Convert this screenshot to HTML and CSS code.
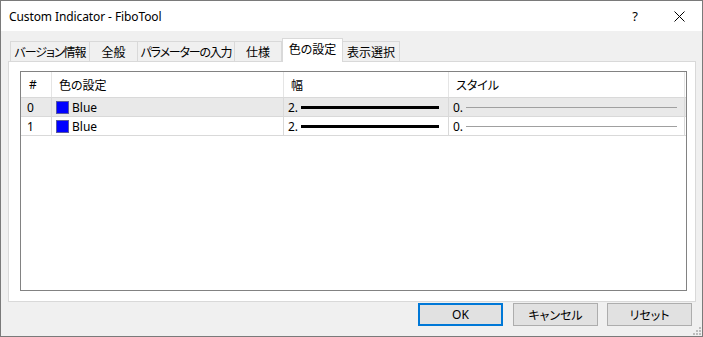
FILE: index.html
```html
<!DOCTYPE html>
<html lang="ja">
<head>
<meta charset="utf-8">
<title>Custom Indicator - FiboTool</title>
<link rel="stylesheet" href="styles.css">
</head>
<body>
<div class="window">
  <div class="titlebar">
    <span class="title">Custom Indicator - FiboTool</span>
    <div class="title-actions">
      <span class="help">?</span>
      <svg class="close" width="11" height="11" viewBox="0 0 11 11"><path d="M0.5 0.5 L10.5 10.5 M10.5 0.5 L0.5 10.5" stroke="#000" stroke-width="1" fill="none"/></svg>
    </div>
  </div>
  <div class="content">
    <div class="tabs">
      <div class="tab tab-first t1">バージョン情報</div>
      <div class="tab t2">全般</div>
      <div class="tab t3">パラメーターの入力</div>
      <div class="tab t4">仕様</div>
      <div class="tab tab-active t5">色の設定</div>
      <div class="tab t6">表示選択</div>
    </div>
    <div class="panel">
      <div class="listbox">
        <div class="row head">
          <div class="cell c-num">#</div>
          <div class="cell c-color">色の設定</div>
          <div class="cell c-width">幅</div>
          <div class="cell c-style">スタイル</div>
        </div>
        <div class="row item selected">
          <div class="cell c-num">0</div>
          <div class="cell c-color"><span class="swatch"></span>Blue</div>
          <div class="cell c-width"><span class="val">2.</span><span class="thick"></span></div>
          <div class="cell c-style"><span class="val">0.</span><span class="thin"></span></div>
        </div>
        <div class="row item">
          <div class="cell c-num">1</div>
          <div class="cell c-color"><span class="swatch"></span>Blue</div>
          <div class="cell c-width"><span class="val">2.</span><span class="thick"></span></div>
          <div class="cell c-style"><span class="val">0.</span><span class="thin"></span></div>
        </div>
      </div>
    </div>
    <div class="buttons">
      <button class="btn btn-default">OK</button>
      <button class="btn btn-cancel">キャンセル</button>
      <button class="btn">リセット</button>
    </div>
  </div>
  <svg class="grip" width="9" height="9" viewBox="0 0 9 9">
    <rect x="7" y="1" width="2" height="2" fill="#bcbcbc"/>
    <rect x="4" y="4" width="2" height="2" fill="#bcbcbc"/>
    <rect x="7" y="4" width="2" height="2" fill="#bcbcbc"/>
    <rect x="1" y="7" width="2" height="2" fill="#bcbcbc"/>
    <rect x="4" y="7" width="2" height="2" fill="#bcbcbc"/>
    <rect x="7" y="7" width="2" height="2" fill="#bcbcbc"/>
  </svg>
</div>
</body>
</html>
```
FILE: styles.css
```css
* { box-sizing: border-box; }
html, body { margin: 0; padding: 0; }
body {
  font-family: "Noto Sans", "Noto Sans CJK JP", sans-serif;
  font-size: 12px;
  color: #000;
  background: #fff;
  font-feature-settings: "palt" 1;
}
.window {
  position: relative;
  width: 703px;
  height: 337px;
  border: 1px solid #7a7a7a;
  background: #f0f0f0;
  display: flex;
  flex-direction: column;
  overflow: hidden;
}
.titlebar {
  height: 30px;
  background: #fff;
  display: flex;
  align-items: center;
  padding-left: 8px;
  flex: none;
}
.title { font-size: 12px; letter-spacing: -0.1px; }
.title-actions {
  margin-left: auto;
  display: flex;
  align-items: center;
  padding-right: 17px;
}
.help { font-size: 13px; margin-right: 36px; }
.close { display: block; }
.content {
  padding: 7px 6px 0 7px;
  display: flex;
  flex-direction: column;
}
.tabs {
  display: flex;
  align-items: flex-end;
  height: 23px;
  padding-left: 2px;
}
.tab {
  height: 20px;
  border-top: 1px solid #d9d9d9;
  border-right: 1px solid #d9d9d9;
  background: #f0f0f0;
  display: flex;
  align-items: center;
  justify-content: center;
  white-space: nowrap;
  padding-top: 1px;
}
.tab-first { border-left: 1px solid #d9d9d9; }
.t1 { width: 80px; letter-spacing: -1px; }
.t2 { width: 48px; }
.t3 { width: 97px; letter-spacing: -1.2px; }
.t4 { width: 47px; }
.t5 { width: 61px; }
.t6 { width: 57px; }
.tab-active {
  height: 24px;
  margin-bottom: -1px;
  background: #fff;
  border-left: 1px solid #d9d9d9;
  position: relative;
  z-index: 1;
  padding-top: 0;
  padding-bottom: 3px;
}
.panel {
  width: 688px;
  height: 241px;
  background: #fff;
  border: 1px solid #d9d9d9;
  padding: 9px 8px 10px 11px;
}
.listbox {
  width: 100%;
  height: 100%;
  border: 1px solid #828282;
  background: #fff;
}
.row {
  display: grid;
  grid-template-columns: 31px 232px 165px 236px;
  border-bottom: 1px solid #d9d9d9;
}
.head { height: 26px; }
.item { height: 19px; }
.selected { background: #e9e9e9; }
.cell {
  border-right: 1px solid #d9d9d9;
  display: flex;
  align-items: center;
  white-space: nowrap;
  padding-left: 5px;
}
.head .cell { border-right-color: #e5e5e5; padding-left: 7px; padding-top: 0; }
.head .c-num { padding-left: 8px; }
.item .c-num { padding-left: 6px; }
.item .c-color { padding-left: 4px; }
.swatch {
  width: 13px;
  height: 13px;
  background: #0000ff;
  border: 1px solid #5a5aa0;
  margin-right: 3px;
}
.val { width: 13px; }
.item .c-width, .item .c-style { padding-left: 4px; }
.thick {
  width: 138px;
  height: 3px;
  background: #000;
}
.thin {
  width: 211px;
  height: 1px;
  background: #a0a0a0;
}
.buttons {
  display: flex;
  justify-content: flex-end;
  padding-top: 1px;
  padding-right: 4px;
}
.btn {
  width: 85px;
  height: 23px;
  font-family: "Noto Sans", "Noto Sans CJK JP", sans-serif;
  font-size: 12px;
  font-feature-settings: "palt" 1;
  background: #e1e1e1;
  border: 1px solid #adadad;
  margin: 0 0 0 9px;
  padding: 0;
  color: #000;
}
.btn-default {
  border: 2px solid #0078d7;
}
.btn-cancel { margin-left: 10px; }
.grip {
  position: absolute;
  right: 1px;
  bottom: 1px;
}
```
